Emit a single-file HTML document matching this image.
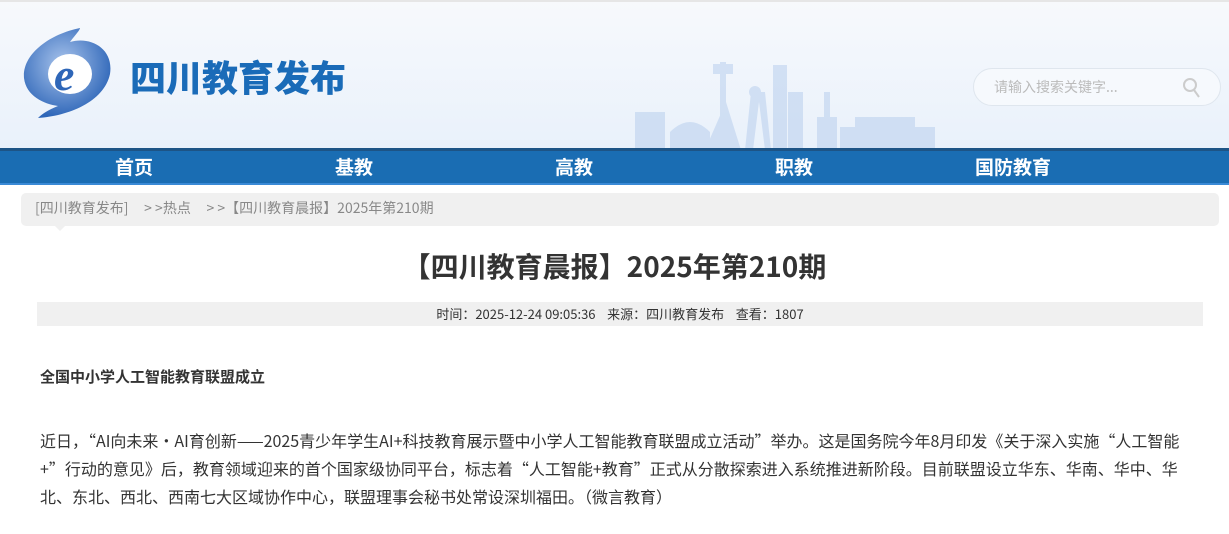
<!DOCTYPE html>
<html><head><meta charset="utf-8"><style>
*{margin:0;padding:0;box-sizing:border-box}
body{width:1229px;height:534px;overflow:hidden;background:#fff;font-family:"Noto Sans CJK SC","Liberation Sans",sans-serif;color:#333;position:relative}
.hdr{position:absolute;left:0;top:0;width:1229px;height:148px;background:linear-gradient(#f7f9fc,#e9f1fb);border-top:2px solid #e6e6e6}
.title{position:absolute;left:130px;top:50px;font-size:36px;line-height:48px;font-weight:900;color:#1a6bb8;letter-spacing:0px}
.search{position:absolute;left:973px;top:66px;width:248px;height:38px;border:1px solid #dfe6ee;border-radius:19px;background:#f6f9fd;font-size:14px;color:#bbb;padding:8px 0 0 20px}
.nav{position:absolute;left:0;top:148px;width:1229px;height:37px;background:#1a6db3;border-top:3px solid #1d5486;border-bottom:2px solid #3a8ad6}
.nav span{position:absolute;top:2px;color:#fff;font-size:19px;font-weight:bold;line-height:28px}
.bc{position:absolute;left:21px;top:193px;width:1198px;height:33px;background:#f0f0f0;border-radius:5px;font-size:14px;color:#888;padding:5px 0 0 14px;white-space:pre}
.h1{position:absolute;left:0;top:246px;width:1229px;text-align:center;font-size:28px;font-weight:bold;color:#333}
.meta{position:absolute;left:37px;top:302px;width:1166px;height:24px;background:#f0f0f0;font-size:13px;text-align:center;padding-top:2px;color:#333}
.sub{position:absolute;left:40px;top:366px;font-size:15px;font-weight:bold}
.p{position:absolute;left:40px;top:426px;width:1162px;font-size:16px;line-height:28px}
</style></head><body>
<div class="hdr">
<svg style="position:absolute;left:20px;top:24px" width="92" height="92" viewBox="0 0 92 92">
<defs><radialGradient id="g" cx="45%" cy="40%" r="60%"><stop offset="0" stop-color="#a9c4ec"/><stop offset="1" stop-color="#2e66b8"/></radialGradient></defs>
<path d="M60 2C30 8 2 28 4 52c2 18 20 26 34 28-10 4-16 8-20 12 30-2 66-16 72-44C94 22 70 10 50 16 56 8 60 4 60 2Z" fill="url(#g)"/>
<ellipse cx="50" cy="48" rx="22" ry="20" fill="#fff"/>
<text x="34" y="64" font-size="46" font-style="italic" font-weight="bold" fill="#2e66b8" font-family="Liberation Serif,serif">e</text>
</svg>
<div class="title">四川教育发布</div>
<svg style="position:absolute;left:625px;top:30px;opacity:.55" width="320" height="118" viewBox="0 0 320 118"><g fill="#b9cfee">
<rect x="95" y="30" width="6" height="88"/><rect x="88" y="32" width="20" height="10"/><polygon points="80,118 116,118 101,70"/>
<rect x="148" y="33" width="14" height="85"/><rect x="163" y="60" width="15" height="58"/>
<polygon points="120,118 126,60 140,60 146,118 140,118 134,70 128,118"/><circle cx="130" cy="60" r="6"/>
<rect x="199" y="60" width="6" height="58"/><rect x="192" y="85" width="20" height="33"/>
<path d="M10 80h30v38H10zM45 100q20-20 40 0v18H45z"/><rect x="215" y="95" width="95" height="23"/><rect x="230" y="85" width="60" height="10"/></g></svg>
<div class="search">请输入搜索关键字...
<svg style="position:absolute;right:18px;top:8px" width="20" height="22"><circle cx="8" cy="8" r="6" fill="none" stroke="#ccc" stroke-width="2"/><line x1="12" y1="13" x2="17" y2="20" stroke="#ccc" stroke-width="2"/></svg></div>
</div>
<div class="nav"><span style="left:115px">首页</span><span style="left:335px">基教</span><span style="left:555px">高教</span><span style="left:775px">职教</span><span style="left:975px">国防教育</span></div>
<div class="bc">[四川教育发布]     &gt; &gt;热点     &gt; &gt;【四川教育晨报】2025年第210期</div>
<div style="position:absolute;left:55px;top:226px;border:5px solid transparent;border-top-color:#f0f0f0"></div>
<div class="h1">【四川教育晨报】2025年第210期</div>
<div class="meta">时间：2025-12-24 09:05:36&nbsp;&nbsp;&nbsp; 来源：四川教育发布&nbsp;&nbsp;&nbsp; 查看：1807</div>
<div class="sub">全国中小学人工智能教育联盟成立</div>
<div class="p">近日，“AI向未来·AI育创新——2025青少年学生AI+科技教育展示暨中小学人工智能教育联盟成立活动”举办。这是国务院今年8月印发《关于深入实施“人工智能+”行动的意见》后，教育领域迎来的首个国家级协同平台，标志着“人工智能+教育”正式从分散探索进入系统推进新阶段。目前联盟设立华东、华南、华中、华北、东北、西北、西南七大区域协作中心，联盟理事会秘书处常设深圳福田。（微言教育）</div>
</body></html>
